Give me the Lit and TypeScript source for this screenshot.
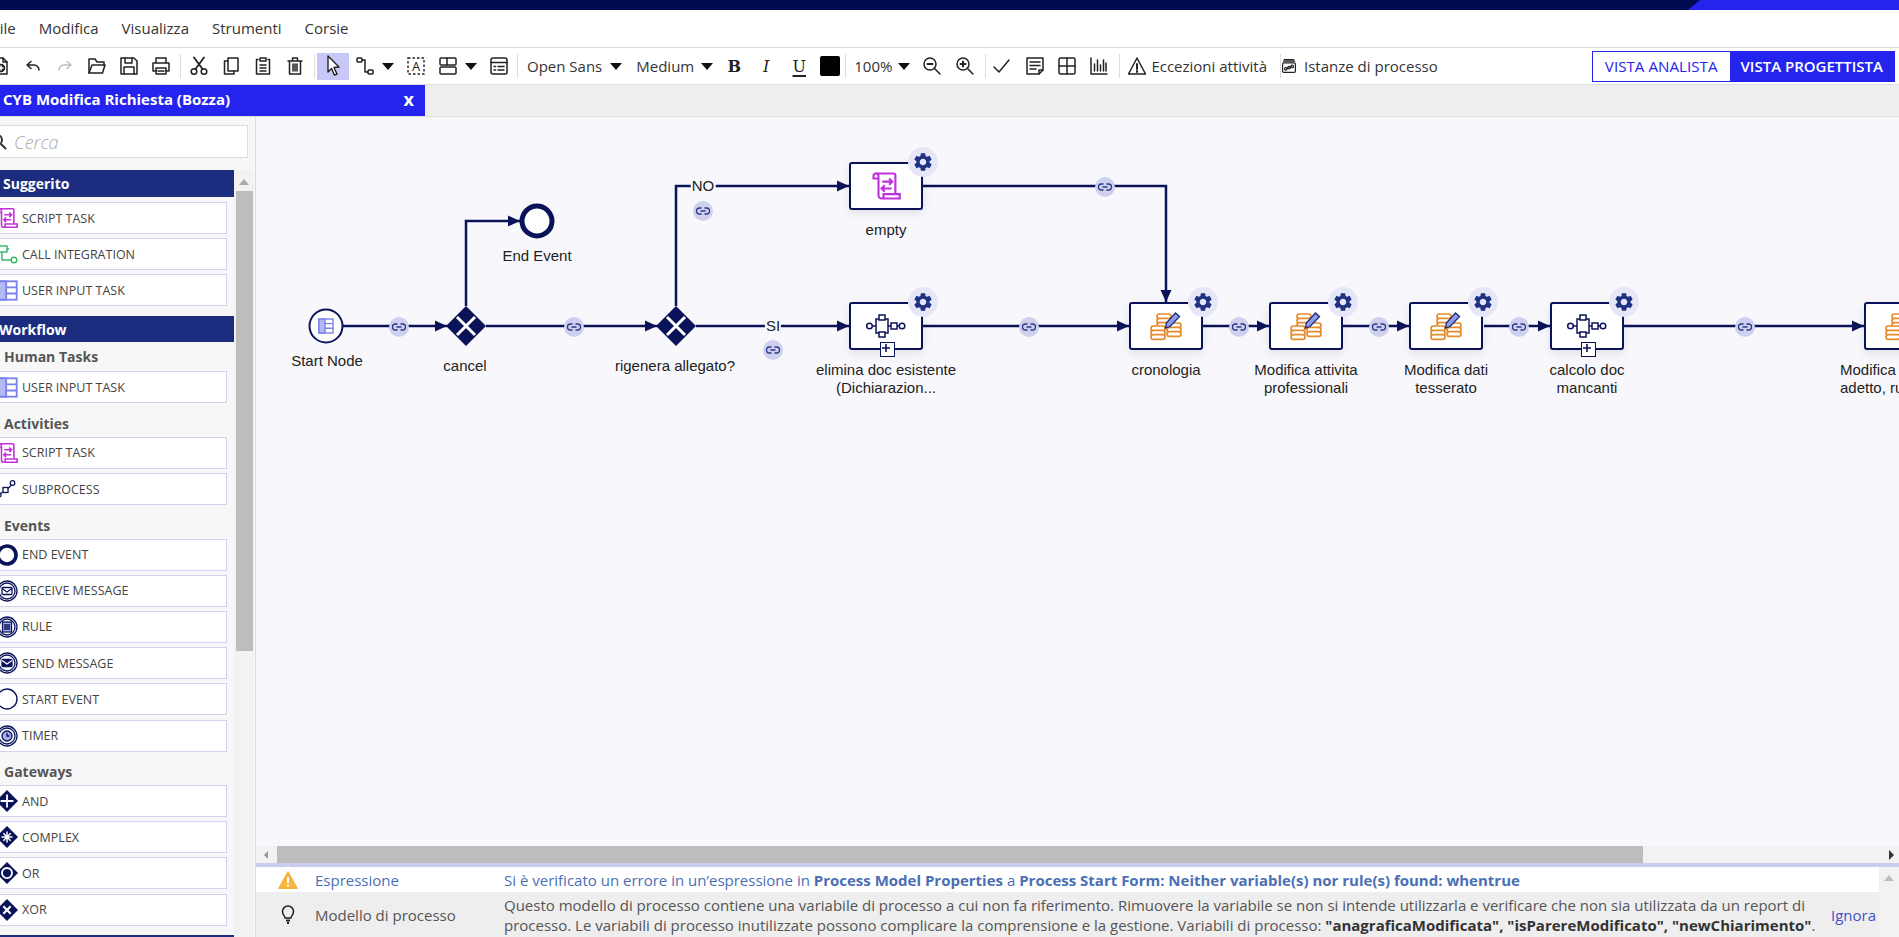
import {LitElement, html, svg, css} from 'lit';
import {customElement} from 'lit/decorators.js';

const NAVY = '#0b1358';
// canvas origin inside the page, diagram data below is in page coordinates
const OX = 256;
const OY = 117;

const GEAR = 'M19.14 12.94c.04-.3.06-.61.06-.94 0-.32-.02-.64-.07-.94l2.03-1.58a.49.49 0 0 0 .12-.61l-1.92-3.32a.488.488 0 0 0-.59-.22l-2.39.96c-.5-.38-1.03-.7-1.62-.94l-.36-2.54a.484.484 0 0 0-.48-.41h-3.84c-.24 0-.43.17-.47.41l-.36 2.54c-.59.24-1.13.57-1.62.94l-2.39-.96c-.22-.08-.47 0-.59.22L2.74 8.87c-.12.21-.08.47.12.61l2.03 1.58c-.05.3-.09.63-.09.94s.02.64.07.94l-2.03 1.58a.49.49 0 0 0-.12.61l1.92 3.32c.12.22.37.29.59.22l2.39-.96c.5.38 1.03.7 1.62.94l.36 2.54c.05.24.24.41.48.41h3.84c.24 0 .44-.17.47-.41l.36-2.54c.59-.24 1.13-.56 1.62-.94l2.39.96c.22.08.47 0 .59-.22l1.92-3.32c.12-.22.07-.47-.12-.61l-2.01-1.58zM12 15.6c-1.98 0-3.6-1.62-3.6-3.6s1.62-3.6 3.6-3.6 3.6 1.62 3.6 3.6-1.62 3.6-3.6 3.6z';

const scriptIcon = (size: number) => html`
  <svg width=${size} height=${size} viewBox="0 0 24 24" fill="none" stroke="#c22fdc" stroke-width="1.7">
    <path d="M4 2h14a1.5 1.5 0 0 1 1.5 1.5V18"/>
    <path d="M4 2a2 2 0 0 0-2 2v2h4"/>
    <path d="M4 2a2 2 0 0 1 2 2v15.5a2.5 2.5 0 0 0 2.5 2.5H23v-3.5H10v3"/>
    <path d="M9 8.5h8M14.5 6l2.5 2.5-2.5 2.5M16.5 14H8.5M11 11.5L8.5 14l2.5 2.5"/>
  </svg>`;

const subprocessIcon = html`
  <svg width="40" height="24" viewBox="0 0 40 24" fill="none" stroke=${NAVY} stroke-width="1.5">
    <circle cx="3.5" cy="12" r="2.8"/><path d="M6.3 12H10"/>
    <rect x="10" y="5" width="12" height="14"/>
    <rect x="13" y="1" width="6" height="5" fill="#fff"/><rect x="13" y="18" width="6" height="5" fill="#fff"/>
    <path d="M22 12h3"/><rect x="25" y="9" width="6" height="6"/><path d="M31 12h2"/>
    <circle cx="36" cy="12" r="2.8"/>
  </svg>`;

const coinRows = (x: number, y: number, rows: number) => {
  const out = [];
  for (let i = 0; i < rows; i++) {
    out.push(svg`<rect x=${x} y=${y + i * 4.3} width="14" height="4.8" rx="2.4" fill="#fff"/>`);
  }
  return out;
};

const coinsIcon = html`
  <svg width="32" height="31" viewBox="0 0 32 31" fill="none" stroke="#e58c2c" stroke-width="1.7">
    ${coinRows(7, 3, 3)}${coinRows(17, 12, 3)}${coinRows(1, 15, 3)}
    <path d="M15.5 17l.8-5L25.5 2l4 3.5L20 15.5z" fill="#8f9ce8" stroke="#1b2a78" stroke-width="1.3"/>
  </svg>`;

const userInputIcon = (size: number) => html`
  <svg width=${size} height=${size} viewBox="0 0 16 16" fill="none" stroke="#7a83ea" stroke-width="1.4">
    <rect x="1" y="1" width="14" height="14"/>
    <rect x="1" y="1" width="6" height="14" fill="#b4b9f4"/>
    <path d="M7 5.6h8M7 10.3h8"/>
  </svg>`;

const tb = (content: unknown) => html`
  <svg width="20" height="20" viewBox="0 0 20 20" fill="none" stroke="#222" stroke-width="1.5" stroke-linejoin="round" stroke-linecap="round">${content}</svg>`;

const ICONS: Record<string, unknown> = {
  doc: tb(svg`<path d="M4 18V2h8l4 4v12z"/><path d="M12 2v4h4"/><circle cx="10" cy="12" r="3.5" fill="#222"/><path d="M8 12h4M10 10v4" stroke="#fff"/>`),
  undo: tb(svg`<path d="M4 9l4-3.5M4 9l4 3.5M4 9h7a5 5 0 0 1 5 5"/>`),
  redo: html`<svg width="20" height="20" viewBox="0 0 20 20" fill="none" stroke="#bbb" stroke-width="1.4" stroke-linecap="round"><path d="M16 9l-4-3.5M16 9l-4 3.5M16 9H9a5 5 0 0 0-5 5"/></svg>`,
  folder: tb(svg`<path d="M2 17V3h6l2 3h7v3"/><path d="M2 17l3-8h13l-2.5 8z"/>`),
  save: tb(svg`<path d="M2 2h13l3 3v13H2z"/><path d="M6 2v5h7V2M5 18v-7h10v7"/>`),
  print: tb(svg`<path d="M5 7V2h10v5M5 15H2V7h16v8h-3"/><path d="M5 12h10v6H5z"/><path d="M7 15h6"/>`),
  cut: tb(svg`<circle cx="5" cy="15.5" r="2.8"/><circle cx="15" cy="15.5" r="2.8"/><path d="M6.5 13L15 1.5M13.5 13L5 1.5" stroke-width="1.8"/>`),
  copy: tb(svg`<path d="M7 2h10v13H7z"/><path d="M7 5H3.5v13H13v-3"/>`),
  paste: tb(svg`<path d="M5 3.5H3.5V18h13V3.5H15"/><path d="M7 2h6v3H7zM7 9h6M7 12h6M7 15h6"/>`),
  trash: tb(svg`<path d="M3 5h14M7.5 5V2h5v3M4.5 5v13h11V5"/><path d="M8 8v7M10 8v7M12 8v7"/>`),
  pointer: html`<svg width="20" height="22" viewBox="0 0 20 22"><path d="M5 1l11 11-5 .5 3 6.5-2.5 1.2-3-6.7L5 17z" fill="#fff" stroke="#222" stroke-width="1.4" stroke-linejoin="round"/></svg>`,
  connect: tb(svg`<rect x="2" y="2" width="5" height="4" rx="1"/><rect x="13" y="14" width="5" height="4" rx="1"/><path d="M7 4h3v12h3"/>`),
  abox: html`<svg width="20" height="20" viewBox="0 0 20 20" fill="none" stroke="#222" stroke-width="1.4"><path d="M2 2h16v16H2z" stroke-dasharray="2.5 2"/><text x="10" y="15" text-anchor="middle" font-size="13" font-family="Open Sans" fill="#222" stroke="none">A</text></svg>`,
  layout: tb(svg`<rect x="2" y="2" width="16" height="7" rx="1"/><rect x="2" y="11" width="16" height="7" rx="1"/><path d="M9 2v7"/>`),
  form: tb(svg`<rect x="2" y="2" width="16" height="16" rx="2"/><path d="M2 6.5h16M5 10.5h1.5M9 10.5h6M5 14h1.5M9 14h6"/>`),
  zoomOut: tb(svg`<circle cx="8" cy="8" r="6"/><path d="M12.5 12.5L18 18"/><path d="M5.5 8h5" stroke-width="2"/>`),
  zoomIn: tb(svg`<circle cx="8" cy="8" r="6"/><path d="M12.5 12.5L18 18"/><path d="M5.5 8h5M8 5.5v5" stroke-width="2"/>`),
  check: tb(svg`<path d="M2 11l5 5L17 4"/>`),
  note: tb(svg`<path d="M2 2h16v12l-4 4H2z"/><path d="M14 18v-4h4M5 6h10M5 9.5h10M5 13h6"/>`),
  grid: tb(svg`<rect x="2" y="2" width="16" height="16" rx="1.5"/><path d="M10 2v16M2 10h16"/>`),
  chart: tb(svg`<path d="M2 2v16h16M5.5 15V8M8.5 15V4M11.5 15V9M14.5 15V4M17 15V7"/>`),
  warning: tb(svg`<path d="M10 2l8.5 16h-17z"/><path d="M10 8v5" stroke-width="2"/><path d="M10 15v1" stroke-width="2"/>`),
  stack: tb(svg`<path d="M4 2h12M3 4h14"/><rect x="2" y="6" width="16" height="12" rx="1.5"/><circle cx="6" cy="13.5" r="1.6"/><circle cx="10" cy="12" r="1.6"/><circle cx="14" cy="10.5" r="1.6"/><path d="M7 13l2-.8M11 11.5l2-.6"/>`),
};

const circled = (inner: unknown, stroke = 1.3) => html`
  <svg width="22" height="22" viewBox="0 0 22 22" fill="none" stroke=${NAVY} stroke-width=${stroke}>
    <circle cx="11" cy="11" r="10"/><circle cx="11" cy="11" r="8"/>${inner}
  </svg>`;

const diamond = (inner: unknown) => html`
  <svg width="24" height="24" viewBox="0 0 24 24">
    <path d="M12 0l12 12-12 12L0 12z" fill=${NAVY}/>${inner}
  </svg>`;

const SIDE_ICONS: Record<string, unknown> = {
  script: scriptIcon(22),
  integration: html`<svg width="22" height="22" viewBox="0 0 22 22" fill="none" stroke="#35b56a" stroke-width="1.4"><rect x="3" y="3" width="8" height="6"/><path d="M6 9v8h9"/><circle cx="18" cy="17" r="2.8"/><path d="M11 6h2"/></svg>`,
  user: userInputIcon(21),
  subprocess: html`<svg width="22" height="22" viewBox="0 0 22 22" fill="none" stroke=${NAVY} stroke-width="1.3"><circle cx="3" cy="17" r="2"/><rect x="7" y="9.5" width="5" height="5"/><circle cx="16.5" cy="5" r="2.3"/><path d="M4.5 15.5L7 14M12 10.5l3.5-3.5"/></svg>`,
  end: html`<svg width="22" height="22" viewBox="0 0 22 22" fill="none" stroke=${NAVY} stroke-width="3.6"><circle cx="11" cy="11" r="9"/></svg>`,
  receive: circled(svg`<rect x="6" y="7.5" width="10" height="7" rx="1"/><path d="M6 8.5l5 3.5 5-3.5"/>`),
  rule: circled(svg`<rect x="6.5" y="6" width="9" height="10" fill="#a6aef0"/><path d="M8 9h6M8 11h6M8 13h6"/>`),
  send: circled(svg`<rect x="6" y="7.5" width="10" height="7" rx="1" fill=${NAVY}/><path d="M6 8.5l5 3.5 5-3.5" stroke="#fff"/>`),
  start: html`<svg width="22" height="22" viewBox="0 0 22 22" fill="none" stroke=${NAVY} stroke-width="1.4"><circle cx="11" cy="11" r="10"/></svg>`,
  timer: circled(svg`<circle cx="11" cy="11" r="5" fill="#a6aef0"/><path d="M11 8v3h2.5"/>`),
  and: diamond(svg`<path d="M12 5v14M5 12h14" stroke="#fff" stroke-width="2"/>`),
  complex: diamond(svg`<path d="M12 6v12M6 12h12M8 8l8 8M16 8l-8 8" stroke="#fff" stroke-width="1.6"/>`),
  or: diamond(svg`<circle cx="12" cy="12" r="5.5" fill="none" stroke="#fff" stroke-width="2"/>`),
  xor: diamond(svg`<path d="M8 8l8 8M16 8l-8 8" stroke="#fff" stroke-width="2.4"/>`),
};

// sidebar content
const GROUPS = [
  {header: 'Suggerito', tight: false, sections: [{title: '', items: [['script', 'SCRIPT TASK'], ['integration', 'CALL INTEGRATION'], ['user', 'USER INPUT TASK']]}]},
  {header: 'Workflow', tight: true, sections: [
    {title: 'Human Tasks', items: [['user', 'USER INPUT TASK']]},
    {title: 'Activities', items: [['script', 'SCRIPT TASK'], ['subprocess', 'SUBPROCESS']]},
    {title: 'Events', items: [['end', 'END EVENT'], ['receive', 'RECEIVE MESSAGE'], ['rule', 'RULE'], ['send', 'SEND MESSAGE'], ['start', 'START EVENT'], ['timer', 'TIMER']]},
    {title: 'Gateways', items: [['and', 'AND'], ['complex', 'COMPLEX'], ['or', 'OR'], ['xor', 'XOR']]},
  ]},
];

// flows: path, and the arrow tip with its direction
const EDGES: {d: string; tip: [number, number, 'r' | 'd']}[] = [
  {d: 'M343 326H447', tip: [447, 326, 'r']},
  {d: 'M466 306V221H520', tip: [520, 221, 'r']},
  {d: 'M486 326H657', tip: [657, 326, 'r']},
  {d: 'M676 306V186H849', tip: [849, 186, 'r']},
  {d: 'M696 326H849', tip: [849, 326, 'r']},
  {d: 'M923 186H1166V302', tip: [1166, 302, 'd']},
  {d: 'M923 326H1129', tip: [1129, 326, 'r']},
  {d: 'M1203 326H1269', tip: [1269, 326, 'r']},
  {d: 'M1343 326H1409', tip: [1409, 326, 'r']},
  {d: 'M1484 326H1550', tip: [1550, 326, 'r']},
  {d: 'M1623 326H1864', tip: [1864, 326, 'r']},
];

const LINKS = [[399, 327], [574, 327], [703, 211], [773, 350], [1105, 187], [1029, 327], [1239, 327], [1379, 327], [1519, 327], [1745, 327]];

const TASKS = [
  {x: 849, y: 162, icon: 'script', label: ['empty'], expand: false},
  {x: 849, y: 302, icon: 'sub', label: ['elimina doc esistente', '(Dichiarazion...'], expand: true},
  {x: 1129, y: 302, icon: 'coins', label: ['cronologia'], expand: false},
  {x: 1269, y: 302, icon: 'coins', label: ['Modifica attivita', 'professionali'], expand: false},
  {x: 1409, y: 302, icon: 'coins', label: ['Modifica dati', 'tesserato'], expand: false},
  {x: 1550, y: 302, icon: 'sub', label: ['calcolo doc', 'mancanti'], expand: true},
  {x: 1864, y: 302, icon: 'coins', label: [], expand: false},
];

const LABELS: [string, number, number][] = [
  ['Start Node', 327, 361],
  ['End Event', 537, 256],
  ['cancel', 465, 366],
  ['rigenera allegato?', 675, 366],
];

@customElement('app-root')
export class AppRoot extends LitElement {
  static styles = css`
    :host {
      display: flex;
      flex-direction: column;
      height: 937px;
      overflow: hidden;
      font-family: 'Open Sans', sans-serif;
      font-size: 15px;
      color: #333;
      background: #fff;
    }

    .topbar {
      height: 10px;
      flex: none;
      display: flex;
      justify-content: flex-end;
      background: #000b52;
    }

    .topbar__accent {
      width: 211px;
      background: #2424ee;
      clip-path: polygon(12px 0, 100% 0, 100% 100%, 0 100%);
    }

    .menu {
      height: 37px;
      box-sizing: border-box;
      padding-bottom: 2px;
      flex: none;
      display: flex;
      align-items: center;
      gap: 23px;
      margin-left: -8px;
      color: #333;
    }

    .toolbar {
      height: 36px;
      flex: none;
      display: flex;
      align-items: center;
      margin-left: -15px;
      border-top: 1px solid #ddd;
      border-bottom: 1px solid #ddd;
      padding-right: 4px;
    }

    .slot {
      flex: none;
      width: 32px;
      height: 27px;
      display: flex;
      align-items: center;
      justify-content: center;
    }

    .slot--active {
      background: #c8c8f8;
    }

    .slot--narrow {
      width: 16px;
    }

    .caret {
      flex: none;
      width: 14px;
      display: flex;
      justify-content: center;
    }

    .caret::before {
      content: '';
      border-left: 6px solid transparent;
      border-right: 6px solid transparent;
      border-top: 7px solid #111;
    }

    .sep {
      flex: none;
      width: 1px;
      height: 24px;
      background: #ddd;
    }

    .glyph {
      font-family: 'DejaVu Serif', serif;
      font-size: 16px;
      color: #222;
    }

    .glyph--b { font-weight: 700; }
    .glyph--i { font-style: italic; }
    .glyph--u { text-decoration: underline 2px; text-underline-offset: 3px; }

    .swatch {
      flex: none;
      width: 20px;
      height: 20px;
      border-radius: 2px;
      background: #000;
    }

    .mn2 { margin-left: -2px; }
    .m1 { margin-left: 1px; }
    .m2 { margin-left: 2px; }
    .m3 { margin-left: 3px; }
    .m4 { margin-left: 4px; }
    .m5 { margin-left: 5px; }
    .m6 { margin-left: 6px; }
    .m7 { margin-left: 7px; }
    .m8 { margin-left: 8px; }
    .m9 { margin-left: 9px; }
    .m13 { margin-left: 13px; }
    .mr2 { margin-right: 2px; }

    .views {
      margin-left: auto;
      display: flex;
      height: 31px;
      border: 1.5px solid #2424ee;
      box-sizing: border-box;
    }

    .views__item {
      display: flex;
      align-items: center;
      padding: 0 12px;
      font-size: 15.2px;
      font-weight: 500;
      color: #2424ee;
    }

    .views__item--on {
      padding: 0 11px;
      background: #2424ee;
      color: #fff;
      font-size: 15px;
      font-weight: 600;
    }

    .tabs {
      height: 31px;
      flex: none;
      display: flex;
      background: #eee;
      border-bottom: 1px solid #ddd;
    }

    .tab {
      width: 425px;
      box-sizing: border-box;
      display: flex;
      align-items: center;
      justify-content: space-between;
      padding: 0 11px 3px 3px;
      background: #2424ee;
      color: #fff;
      font-weight: 700;
    }

    .tab__close {
      font-size: 18px;
      font-weight: 700;
    }

    .main {
      flex: 1;
      min-height: 0;
      display: flex;
    }

    .side {
      flex: none;
      width: 256px;
      box-sizing: border-box;
      display: flex;
      flex-direction: column;
      background: #f7f7f8;
      border-right: 1px solid #d8d8f2;
      overflow: hidden;
      font-size: 14px;
    }

    .search {
      flex: none;
      width: 248px;
      height: 33px;
      box-sizing: border-box;
      margin: 8px 0 12px;
      display: flex;
      align-items: center;
      gap: 5px;
      background: #fff;
      border: 1px solid #ddd;
      border-left: none;
      color: #aaa;
      font-style: italic;
      font-size: 18px;
      font-weight: 300;
    }

    .search svg {
      margin-left: -9px;
    }

    .side__body {
      flex: 1;
      min-height: 0;
      display: flex;
    }

    .list {
      flex: none;
      width: 240px;
      margin-left: -6px;
    }

    .list__header {
      height: 27px;
      display: flex;
      align-items: center;
      padding-left: 9px;
      background: #1c2d80;
      color: #fff;
      font-weight: 700;
    }

    .list__header--tight {
      padding-left: 5px;
      height: 26px;
    }

    .list__header--end {
      margin-top: 9px;
    }

    .list__body {
      margin-top: 5px;
      margin-bottom: 10px;
    }

    .list__body--tight {
      margin: 0;
    }

    .list__title {
      height: 27px;
      margin-top: 6.5px;
      display: flex;
      align-items: center;
      padding-left: 10px;
      font-weight: 700;
      color: #555;
    }

    .list__title--first {
      margin-top: 0;
      height: 29px;
    }

    .list__items {
      display: grid;
      gap: 4.2px;
    }

    .item {
      height: 32px;
      box-sizing: border-box;
      margin: 0 7px 0 1px;
      display: flex;
      align-items: center;
      gap: 4px;
      background: #fff;
      border: 1px solid #d2d2f0;
      font-size: 12.5px;
      color: #444;
    }

    .item__icon {
      flex: none;
      width: 22px;
      display: flex;
      justify-content: center;
    }

    .vbar {
      flex: none;
      width: 20px;
      display: flex;
      flex-direction: column;
      align-items: center;
      background: #f2f2f2;
    }

    .vbar__up {
      flex: none;
      margin: 9px 0 6px;
      border-left: 5px solid transparent;
      border-right: 5px solid transparent;
      border-bottom: 6px solid #aaa;
    }

    .vbar__thumb {
      flex: none;
      width: 17px;
      height: 460px;
      background: #bdbdbd;
    }

    .work {
      flex: 1;
      min-width: 0;
      display: flex;
      flex-direction: column;
    }

    .canvas {
      flex: 1;
      min-height: 0;
      position: relative;
      overflow: hidden;
      background: #f8f8fc;
      font-family: 'Liberation Sans', sans-serif;
      font-size: 15px;
      color: #222;
    }

    .edges {
      position: absolute;
      inset: 0;
    }

    .label {
      position: absolute;
      width: 180px;
      margin-left: -90px;
      text-align: center;
      line-height: 18px;
    }

    .label--left {
      width: 120px;
      margin-left: 0;
      text-align: left;
      white-space: nowrap;
    }

    .flowtag {
      position: absolute;
      transform: translate(-50%, -50%);
      background: #f8f8fc;
      padding: 0 1px;
      line-height: 18px;
    }

    .task {
      position: absolute;
      width: 74px;
      height: 48px;
      box-sizing: border-box;
      display: flex;
      align-items: center;
      justify-content: center;
      background: #fff;
      border: 2.5px solid #0b1358;
      border-radius: 3px;
      box-shadow: 0 3px 10px rgba(40, 40, 90, 0.12);
    }

    .task__gear {
      position: absolute;
      top: -17px;
      right: -17px;
      width: 30px;
      height: 30px;
      display: flex;
      align-items: center;
      justify-content: center;
      border-radius: 50%;
      background: #e5e7f9;
    }

    .task__expand {
      position: absolute;
      bottom: -9px;
      left: 50%;
      width: 13px;
      height: 13px;
      margin-left: -6.5px;
      display: flex;
      background: #fff;
      border: 1.5px solid #0b1358;
    }

    .hscroll {
      flex: none;
      height: 17px;
      display: flex;
      align-items: center;
      background: #f2f2f2;
    }

    .hscroll__left {
      margin-left: 8px;
      border-top: 4px solid transparent;
      border-bottom: 4px solid transparent;
      border-right: 4px solid #999;
    }

    .hscroll__thumb {
      height: 17px;
      width: 1366px;
      margin-left: 9px;
      background: #bdbdbd;
    }

    .hscroll__right {
      margin-left: auto;
      margin-right: 5px;
      border-top: 5px solid transparent;
      border-bottom: 5px solid transparent;
      border-left: 5px solid #333;
    }

    .issues {
      flex: none;
      height: 74px;
      box-sizing: border-box;
      display: flex;
      border-top: 4px solid #ccccf0;
      overflow: hidden;
    }

    .issues__rows {
      flex: 1;
      min-width: 0;
    }

    .issues__bar {
      flex: none;
      width: 20px;
      display: flex;
      justify-content: center;
      background: #f2f2f2;
    }

    .issues__bar::before {
      content: '';
      margin-top: 8px;
      height: 0;
      border-left: 5px solid transparent;
      border-right: 5px solid transparent;
      border-bottom: 6px solid #bbb;
    }

    .issue {
      display: grid;
      grid-template-columns: 59px 189px 1fr 48px;
      align-items: center;
      height: 25px;
      background: #fff;
      color: #4a6fb5;
      white-space: nowrap;
    }

    .issue--tip {
      height: 45px;
      background: #eee;
      color: #555;
      line-height: 20px;
    }

    .issue__icon {
      display: flex;
      justify-content: flex-end;
      padding-right: 17px;
    }

    .issue b {
      font-weight: 700;
    }

    .issue--tip b {
      color: #333;
    }

    .issue__action {
      color: #3f52c8;
    }
  `;

  private renderSideIcon(name: string) {
    return html`<span class="item__icon">${SIDE_ICONS[name]}</span>`;
  }

  private renderSidebar() {
    return html`
      <aside class="side">
        <div class="search">
          <svg width="18" height="18" viewBox="0 0 18 18" fill="none" stroke="#333" stroke-width="2"><circle cx="6" cy="7" r="5"/><path d="M10 11l5 5"/></svg>
          Cerca
        </div>
        <div class="side__body">
          <div class="list">
            ${GROUPS.map((group) => html`
              <div class="list__header ${group.tight ? 'list__header--tight' : ''}">${group.header}</div>
              <div class="list__body ${group.tight ? 'list__body--tight' : ''}">
                ${group.sections.map((section, i) => html`
                  ${section.title ? html`<div class="list__title ${i === 0 ? 'list__title--first' : ''}">${section.title}</div>` : ''}
                  <div class="list__items">
                    ${section.items.map(([icon, text]) => html`
                      <div class="item">${this.renderSideIcon(icon)}${text}</div>
                    `)}
                  </div>
                `)}
              </div>
            `)}
            <div class="list__header list__header--end"></div>
          </div>
          <div class="vbar"><span class="vbar__up"></span><span class="vbar__thumb"></span></div>
        </div>
      </aside>
    `;
  }

  private renderEdges() {
    return html`
      <svg class="edges" width="1643" height="729" fill="none">
        <g transform="translate(${-OX} ${-OY})">
          ${EDGES.map((edge) => svg`<path d=${edge.d} stroke=${NAVY} stroke-width="2.5"/>`)}
          ${EDGES.map((edge) => {
            const [x, y, dir] = edge.tip;
            const points = dir === 'r'
              ? `${x},${y} ${x - 12},${y - 5.5} ${x - 12},${y + 5.5}`
              : `${x},${y} ${x - 5.5},${y - 12} ${x + 5.5},${y - 12}`;
            return svg`<polygon points=${points} fill=${NAVY}/>`;
          })}
          ${this.renderStart()}
          ${svg`<circle cx="537" cy="221" r="15" fill="#fff" stroke=${NAVY} stroke-width="5"/>`}
          ${[466, 676].map((x) => svg`
            <polygon points="${x},306 ${x + 20},326 ${x},346 ${x - 20},326" fill=${NAVY}/>
            <path d="M${x - 9} 317l18 18M${x + 9} 317l-18 18" stroke="#fff" stroke-width="3"/>
          `)}
          ${LINKS.map(([x, y]) => svg`
            <g transform="translate(${x} ${y})">
              <circle r="10" fill="#ced0ee"/>
              <path d="M-1.5-3H-3.5a3 3 0 0 0 0 6H-1.5M1.5-3H3.5a3 3 0 0 1 0 6H1.5M-2.5 0H2.5" stroke="#2b3a86" stroke-width="1.3"/>
            </g>
          `)}
        </g>
      </svg>
    `;
  }

  private renderStart() {
    return svg`
      <circle cx="326" cy="326" r="16.5" fill="#fff" stroke=${NAVY} stroke-width="2"/>
      <g transform="translate(318 318)" stroke="#7a83ea" stroke-width="1.4" fill="none">
        <rect x="1" y="1" width="14" height="14"/>
        <rect x="1" y="1" width="6" height="14" fill="#b4b9f4"/>
        <path d="M7 5.6h8M7 10.3h8"/>
      </g>
    `;
  }

  private renderTask(task: typeof TASKS[number]) {
    const icon = task.icon === 'script' ? scriptIcon(30) : task.icon === 'sub' ? subprocessIcon : coinsIcon;
    return html`
      <div class="task" style="left:${task.x - OX}px;top:${task.y - OY}px">
        ${icon}
        <span class="task__gear">
          <svg width="22" height="22" viewBox="0 0 24 24" fill="#1f3180"><path d=${GEAR}/></svg>
        </span>
        ${task.expand ? html`
          <span class="task__expand">
            <svg width="10" height="10" viewBox="0 0 10 10" stroke=${NAVY} stroke-width="1.6"><path d="M5 1v8M1 5h8"/></svg>
          </span>` : ''}
      </div>
      ${task.label.length ? html`
        <div class="label" style="left:${task.x + 37 - OX}px;top:${task.y + 59 - OY}px">
          ${task.label.map((line) => html`<div>${line}</div>`)}
        </div>` : ''}
    `;
  }

  private renderCanvas() {
    return html`
      <div class="canvas">
        ${this.renderEdges()}
        ${TASKS.map((task) => this.renderTask(task))}
        ${LABELS.map(([text, x, y]) => html`
          <div class="label" style="left:${x - OX}px;top:${y - 9 - OY}px">${text}</div>
        `)}
        <div class="label label--left" style="left:${1840 - OX}px;top:${361 - OY}px">
          <div>Modifica</div>
          <div>adetto, ruolo</div>
        </div>
        <span class="flowtag" style="left:${703 - OX}px;top:${186 - OY}px">NO</span>
        <span class="flowtag" style="left:${773 - OX}px;top:${326 - OY}px">SI</span>
      </div>
    `;
  }

  private renderToolbar() {
    const icon = (name: string, cls = '') => html`<span class="slot ${cls}">${ICONS[name]}</span>`;
    return html`
      <div class="toolbar">
        ${icon('doc')}${icon('undo')}${icon('redo')}${icon('folder')}${icon('save')}${icon('print')}
        <span class="sep m3 mr2"></span>
        ${icon('cut')}${icon('copy')}${icon('paste')}${icon('trash')}
        <span class="sep m3 mr2"></span>
        ${icon('pointer', 'slot--active')}
        ${icon('connect')}<span class="caret"></span>
        ${icon('abox', 'm5')}${icon('layout')}<span class="caret"></span>
        ${icon('form', 'm5')}
        <span class="sep m2"></span>
        <span class="m9">Open Sans</span><span class="caret m7"></span>
        <span class="m13">Medium</span><span class="caret m6"></span>
        <span class="slot glyph glyph--b m4">B</span>
        <span class="slot glyph glyph--i">I</span>
        <span class="slot glyph glyph--u m1">U</span>
        <span class="swatch m5"></span>
        <span class="sep m5"></span>
        <span class="m8">100%</span><span class="caret m5"></span>
        ${icon('zoomOut', 'm5')}${icon('zoomIn', 'm1')}
        <span class="sep m4"></span>
        ${icon('check')}${icon('note', 'm1')}${icon('grid')}${icon('chart')}
        <span class="sep m4"></span>
        ${icon('warning', 'm1')}
        <span class="mn2">Eccezioni attività</span>
        <span class="sep m13"></span>
        ${icon('stack', 'slot--narrow')}
        <span class="m7">Istanze di processo</span>
        <div class="views">
          <span class="views__item">VISTA ANALISTA</span>
          <span class="views__item views__item--on">VISTA PROGETTISTA</span>
        </div>
      </div>
    `;
  }

  private renderIssues() {
    return html`
      <div class="hscroll">
        <span class="hscroll__left"></span>
        <span class="hscroll__thumb"></span>
        <span class="hscroll__right"></span>
      </div>
      <div class="issues">
        <div class="issues__rows">
          <div class="issue">
            <span class="issue__icon">
              <svg width="20" height="18" viewBox="0 0 20 18"><path d="M10 0.5L19.5 17.5H0.5z" fill="#f5b53f" stroke="#f5b53f" stroke-linejoin="round"/><path d="M10 6v6M10 13.5v2" stroke="#fff" stroke-width="2"/></svg>
            </span>
            <span>Espressione</span>
            <span>Si è verificato un errore in un’espressione in <b>Process Model Properties</b> a <b>Process Start Form: Neither variable(s) nor rule(s) found: whentrue</b></span>
            <span></span>
          </div>
          <div class="issue issue--tip">
            <span class="issue__icon">
              <svg width="20" height="20" viewBox="0 0 20 20" fill="none" stroke="#222" stroke-width="1.5"><path d="M7 13c0-2-2.5-3-2.5-6.5a5.5 5.5 0 0 1 11 0C15.5 10 13 11 13 13z"/><path d="M8 15.5h4M9 18h2" stroke-width="2"/></svg>
            </span>
            <span>Modello di processo</span>
            <span>Questo modello di processo contiene una variabile di processo a cui non fa riferimento. Rimuovere la variabile se non si intende utilizzarla e verificare che non sia utilizzata da un report di<br>processo. Le variabili di processo inutilizzate possono complicare la comprensione e la gestione. Variabili di processo: <b>"anagraficaModificata", "isParereModificato", "newChiarimento"</b>.</span>
            <span class="issue__action">Ignora</span>
          </div>
        </div>
        <div class="issues__bar"></div>
      </div>
    `;
  }

  override render() {
    return html`
      <div class="topbar"><span class="topbar__accent"></span></div>
      <div class="menu">
        <span>File</span><span>Modifica</span><span>Visualizza</span><span>Strumenti</span><span>Corsie</span>
      </div>
      ${this.renderToolbar()}
      <div class="tabs">
        <div class="tab"><span>CYB Modifica Richiesta (Bozza)</span><span class="tab__close">x</span></div>
      </div>
      <div class="main">
        ${this.renderSidebar()}
        <div class="work">
          ${this.renderCanvas()}
          ${this.renderIssues()}
        </div>
      </div>
    `;
  }
}
